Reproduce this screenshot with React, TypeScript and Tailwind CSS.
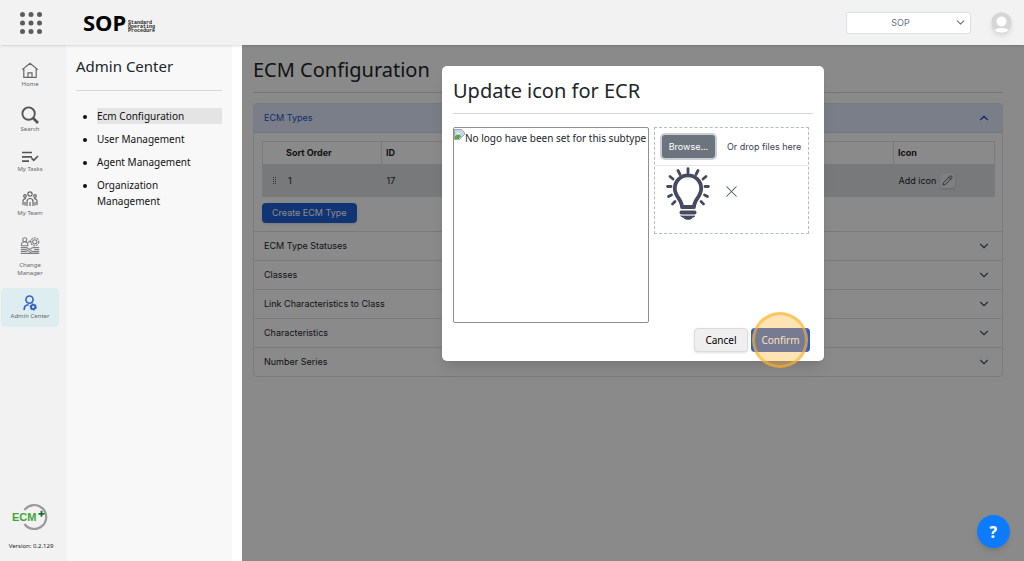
import { useState } from 'react';
import type { ReactNode } from 'react';
import { ChevronDown, ChevronUp, Pencil, X } from 'lucide-react';

interface NavItem {
  label: string;
  icon: ReactNode;
  active?: boolean;
}

const HomeIcon = () => (
  <svg width="18" height="17" viewBox="0 0 18 17" fill="none" stroke="#666" strokeWidth="1.2">
    <path d="M1.2 7.6 9 1.2l7.8 6.4M2.8 6.6v8.8h12.4V6.6M7 15.4v-4.6h4v4.6" />
  </svg>
);

const SearchIcon = () => (
  <svg width="18" height="18" viewBox="0 0 18 18" fill="none" stroke="#555">
    <circle cx="7.6" cy="7.6" r="6.2" strokeWidth="1.9" />
    <path d="m12 12 5 5" strokeWidth="2.6" />
  </svg>
);

const TasksIcon = () => (
  <svg width="18" height="13" viewBox="0 0 18 13" fill="none" stroke="#555" strokeWidth="1.7">
    <path d="M1 1.5h10M1 5.8h10M1 10.1h7" />
    <path d="m10.5 7.1 2.3 2.3L17 5" />
  </svg>
);

const TeamIcon = () => (
  <svg width="16" height="17" viewBox="0 0 16 17" fill="none" stroke="#666" strokeWidth="1.2">
    <circle cx="8" cy="3" r="2.1" />
    <circle cx="3" cy="5" r="1.3" />
    <circle cx="13" cy="5" r="1.3" />
    <path d="M5 15v-4.5a3 3 0 0 1 6 0V15M8 11v4M1 14V10a2.4 2.4 0 0 1 3-2.2M15 14V10a2.4 2.4 0 0 0-3-2.2M3 11v3.5M13 11v3.5" />
  </svg>
);

const ChangeIcon = () => (
  <svg width="20" height="25" viewBox="0 -1 20 25" fill="none" stroke="#7d7d82" strokeWidth="1.1">
    <circle cx="4.8" cy="3.8" r="2" />
    <path d="M1.4 9.8V9a3.2 3.2 0 0 1 6.4 0v.8zM8 6.6l2-1.6 1.4 1.6" />
    <circle cx="14.8" cy="5.8" r="2.1" />
    <circle cx="14.8" cy="5.8" r="4" strokeDasharray="2 0.9" />
    <path d="M.8 11.6h5.4c2.6 0 4.4 4 7.2 4h5.8M.8 13.6h4.8c2.6 0 4 3.4 6.6 3.4M.8 15.5h6M.8 17.4h18.4M19.2 11.6h-6c-1.4 0-2.2.8-3.2 1.7M19.2 13.6h-5" />
  </svg>
);

const AdminIcon = () => (
  <svg width="14" height="16" viewBox="0 0 14 16" fill="none" stroke="#2f5fc4">
    <circle cx="6.5" cy="4.6" r="3.6" strokeWidth="1.6" />
    <path d="M1.2 15v-.8c0-2.4 1.8-4.2 4.4-4.4" strokeWidth="1.6" />
    <circle cx="10.2" cy="12" r="2.1" strokeWidth="1.9" />
    <circle cx="10.2" cy="12" r="3.2" strokeWidth="1" strokeDasharray="1.7 1.65" />
  </svg>
);

const EcmLogo = () => (
  <svg width="38" height="28" viewBox="0 0 38 28" aria-label="ECM+">
    <path d="M12.5 7A12 12 0 1 1 12.5 21" fill="none" stroke="#9a9a9a" strokeWidth="2.2" />
    <text x="0" y="18" fontFamily="Liberation Sans, sans-serif" fontWeight="700" fontSize="11" fill="#3fa535">
      ECM
    </text>
    <path d="M29.5 7.8v6M26.5 10.8h6" stroke="#14701f" strokeWidth="1.8" />
  </svg>
);

const SopLogo = () => (
  <svg width="76" height="34" viewBox="0 0 76 34" aria-label="SOP Standard Operating Procedure">
    <text x="1" y="25" fontFamily="Noto Sans, sans-serif" fontWeight="700" fontSize="22">
      SOP
    </text>
    <g fontFamily="Liberation Mono, monospace" fontWeight="700" fontSize="5" fill="#222">
      <text x="46" y="18">Standard</text>
      <text x="46" y="22">Operating</text>
      <text x="46" y="26">Procedure</text>
    </g>
  </svg>
);

const BulbIcon = () => (
  <svg width="44" height="53" viewBox="0 0 44 53" fill="none" stroke="#444b5f" strokeLinecap="round">
    <path
      d="M16 40c0-8-7.2-10-7.2-18.5a13.2 13.2 0 0 1 26.400 0C35.200 30 28 32 28 40z"
      strokeWidth="3.8"
      strokeLinejoin="round"
    />
    <path d="M15.5 45.5h13" strokeWidth="4" />
    <path d="M15 49h14c-1 1-1.5 1.2-2.5 1.5-1.5 2.5-7.5 2.5-9 0-1-.3-1.5-.5-2.5-1.5z" fill="#444b5f" strokeWidth=".8" />
    <path
      d="M22 1.6v4.4M12 3.5l2 4M32 3.5l-2 4M4 9.5l3 2.5M40 9.5l-3 2.5M1.6 19.5h3.4M42.4 19.5h-3.4M2.5 29.5l3-1.5M41.500 29.500l-3-1.500M6.500 37l2.500-2.500M37.500 37l-2.500-2.500"
      strokeWidth="2.8"
    />
  </svg>
);

const BrokenImageIcon = () => (
  <svg width="11" height="11" viewBox="0 0 11 11" className="shrink-0">
    <path d="M.5.5h7l3 3v2l-5 5h-5z" fill="#c4d7f2" stroke="#a3a3a3" />
    <path d="M1 10V7.5c1.5-2 3.5-2.5 5-1.500l1 1.500L4.500 10z" fill="#5aa845" />
    <path d="M3 4.5h2.5" stroke="#fff" strokeWidth="1.5" />
  </svg>
);

const navItems: NavItem[] = [
  { label: 'Home', icon: <HomeIcon /> },
  { label: 'Search', icon: <SearchIcon /> },
  { label: 'My Tasks', icon: <TasksIcon /> },
  { label: 'My Team', icon: <TeamIcon /> },
  { label: 'Change Manager', icon: <ChangeIcon /> },
  { label: 'Admin Center', icon: <AdminIcon />, active: true },
];

const adminLinks = ['Ecm Configuration', 'User Management', 'Agent Management', 'Organization Management'];

const sections = ['ECM Type Statuses', 'Classes', 'Link Characteristics to Class', 'Characteristics', 'Number Series'];

function Header() {
  return (
    <header className="relative z-10 flex h-[45px] items-center bg-[#f2f2f2] pl-5 pr-3 shadow-sm">
      <button aria-label="Apps" className="mr-10">
        <svg width="22" height="22" viewBox="0 0 22 22" fill="#5c5c5c">
          {[2.5, 11, 19.5].map((y) => [2.5, 11, 19.5].map((x) => <circle key={`${x}-${y}`} cx={x} cy={y} r="2.5" />))}
        </svg>
      </button>
      <SopLogo />
      <div className="relative ml-auto mr-5 flex w-[125px] items-center">
        <select
          aria-label="Workspace"
          className="h-[22px] w-full appearance-none rounded-xs border border-[#dcdfe3] bg-white pr-4 text-center font-['Inter',sans-serif] text-[9px] text-gray-500 [text-align-last:center]"
        >
          <option>SOP</option>
        </select>
        <ChevronDown size={13} strokeWidth={2} className="pointer-events-none absolute right-1 text-gray-500" />
      </div>
      <button aria-label="Profile" className="overflow-hidden rounded-full shadow-md">
        <svg width="21" height="21" viewBox="0 0 21 21">
          <circle cx="10.5" cy="10.5" r="10.5" fill="#d6d6d6" />
          <circle cx="10.5" cy="9.5" r="5" fill="#fff" />
          <path d="M3.5 18.2c1.8-3 12.2-3 14 0a10.5 10.5 0 0 1-14 0z" fill="#fff" />
        </svg>
      </button>
    </header>
  );
}

function Sidebar() {
  return (
    <nav className="flex w-[66px] shrink-0 flex-col bg-[#f2f2f2] pb-[9px] pl-px pr-[7px] pt-[10px]">
      <div className="flex flex-col gap-1">
        {navItems.map((item) => (
          <a
            key={item.label}
            href="#"
            className={`flex flex-col items-center gap-px rounded-sm py-[7px] text-center text-[6px] leading-[8px] text-[#666] ${
              item.active ? 'bg-[#deedf0]' : 'px-3'
            }`}
          >
            {item.icon}
            <span>{item.label}</span>
          </a>
        ))}
      </div>
      <div className="mt-auto flex flex-col items-center gap-[9px] pl-[2px]">
        <EcmLogo />
        <span className="whitespace-nowrap text-[6px] leading-[12px] text-[#222]">Version: 0.2.129</span>
      </div>
    </nav>
  );
}

function AdminPanel() {
  return (
    <aside className="mr-[10px] w-[166px] shrink-0 bg-[#f8f8f8] px-[10px] pt-[10px]">
      <h2 className="border-b border-[#d8d8d8] pb-[13px] text-[15px] leading-[22px] text-[#212529]">Admin Center</h2>
      <ul className="mt-[17px] flex list-disc flex-col gap-[7px] pl-[21px] text-[10px] leading-[16px] text-[#111]">
        {adminLinks.map((link, i) => (
          <li key={link}>
            <a href="#" className={i === 0 ? 'block bg-[#e4e4e4]' : 'block'}>
              {link}
            </a>
          </li>
        ))}
      </ul>
    </aside>
  );
}

function Configuration() {
  return (
    <div className="pl-[11px] pr-[21px] pt-[10px]">
      <h1 className="border-b border-[#d8d8d8] pb-[7px] text-[20px] leading-[30px] text-[#212529]">ECM Configuration</h1>
      <div className="mt-[10px] rounded-sm border border-[#e4e4e6] font-['Inter',sans-serif] text-[9px] text-[#212529]">
        <button className="flex h-[29px] w-full items-center justify-between border-b border-[#cfd8e6] bg-[#dfe9fd] pl-[10px] pr-[11px] text-[#2456c4]">
          ECM Types
          <ChevronUp size={14} />
        </button>
        <div className="pb-2 pl-2 pr-[7px] pt-2">
          <table className="w-full table-fixed border border-[#dee2e6] text-left">
            <thead>
              <tr className="h-[23px] border-b border-[#dee2e6]">
                <th className="w-[119px] border-r border-[#dee2e6] pl-[23px] font-bold">Sort Order</th>
                <th className="border-r border-[#dee2e6] pl-1 font-bold">ID</th>
                <th className="w-[101px] pl-1 font-bold">Icon</th>
              </tr>
            </thead>
            <tbody>
              <tr className="h-8 bg-[#dcdfe3]">
                <td className="pl-[10px]">
                  <span className="flex items-center gap-3">
                    <svg width="3" height="8" viewBox="0 0 3 8" stroke="#666" strokeDasharray="1 1">
                      <path d="M.5 0v8M2.5 0v8" />
                    </svg>
                    1
                  </span>
                </td>
                <td className="pl-[5px]">17</td>
                <td className="pl-[5px]">
                  <span className="flex items-center gap-1">
                    Add icon
                    <button aria-label="Edit icon" className="rounded-sm bg-[#e8eaec] p-[2px] shadow-sm">
                      <Pencil size={11} strokeWidth={1.5} />
                    </button>
                  </span>
                </td>
              </tr>
            </tbody>
          </table>
          <button className="mt-[6px] h-5 rounded-[4px] bg-[#2060d8] px-[10px] text-white shadow-sm">Create ECM Type</button>
        </div>
        {sections.map((section) => (
          <button
            key={section}
            className="flex h-[29px] w-full items-center justify-between border-t border-[#e4e4e6] pl-[10px] pr-[11px]"
          >
            {section}
            <ChevronDown size={14} className="text-gray-600" />
          </button>
        ))}
      </div>
    </div>
  );
}

function UpdateIconDialog({ onClose }: { onClose: () => void }) {
  return (
    <div
      role="dialog"
      aria-labelledby="dialog-title"
      className="w-[382px] rounded-[5px] bg-white px-[11px] pb-[9px] pt-[10px] text-[10px] text-[#212529] shadow-lg"
    >
      <h2 id="dialog-title" className="border-b border-[#d8d8d8] pb-[7px] text-[20px] leading-[30px]">
        Update icon for ECR
      </h2>
      <div className="mt-[13px] flex items-start gap-[5px]">
        <div className="flex h-[196px] w-[196px] shrink-0 items-start whitespace-nowrap rounded-xs border border-[#8f8f8f] pt-px leading-[18px]">
          <BrokenImageIcon />
          <span>No logo have been set for this subtype</span>
        </div>
        <div className="h-[107px] w-[155px] border border-dashed border-[#b5bcc2] font-['Inter',sans-serif] text-[9px]">
          <div className="flex h-[38px] items-center gap-[12px] border-b border-gray-200 pl-[7px]">
            <button className="h-[23px] w-[53px] rounded-[3px] bg-[#6c757d] text-white ring-2 ring-[#c9ced2]">Browse...</button>
            <span className="whitespace-nowrap text-gray-700">Or drop files here</span>
          </div>
          <div className="flex items-center gap-3 pl-[11px] pt-px">
            <BulbIcon />
            <button aria-label="Remove file" className="pb-1 text-gray-600">
              <X size={19} strokeWidth={1.3} />
            </button>
          </div>
        </div>
      </div>
      <div className="mt-[5px] flex justify-end gap-[3px] pr-[3px]">
        <button onClick={onClose} className="h-6 w-[54px] rounded-[4px] border border-[#dcdcdc] bg-[#efefef] text-black shadow-sm">
          Cancel
        </button>
        <div className="relative">
          <button className="h-6 w-[59px] rounded-[4px] bg-[#2f5fc9] text-white">Confirm</button>
          <span className="pointer-events-none absolute left-1/2 top-1/2 h-14 w-14 -translate-x-1/2 -translate-y-1/2 rounded-full border-[3px] border-[#fbb02a]/60 bg-[#fbb02a]/35" />
        </div>
      </div>
    </div>
  );
}

export default function App() {
  const [dialogOpen, setDialogOpen] = useState(true);

  return (
    <div className="flex min-h-screen flex-col bg-white font-['Noto_Sans',sans-serif]">
      <Header />
      <div className="flex grow">
        <Sidebar />
        <AdminPanel />
        <main className="relative min-w-0 grow">
          <Configuration />
          {dialogOpen && (
            <div className="absolute inset-0 flex items-start justify-center bg-black/46 pt-[21px]">
              <UpdateIconDialog onClose={() => setDialogOpen(false)} />
            </div>
          )}
        </main>
      </div>
      <button
        aria-label="Help"
        className="fixed bottom-[13px] right-[14px] h-[33px] w-[33px] rounded-full bg-[#0d7bff] text-[16px] font-extrabold text-white shadow-md"
      >
        ?
      </button>
    </div>
  );
}
